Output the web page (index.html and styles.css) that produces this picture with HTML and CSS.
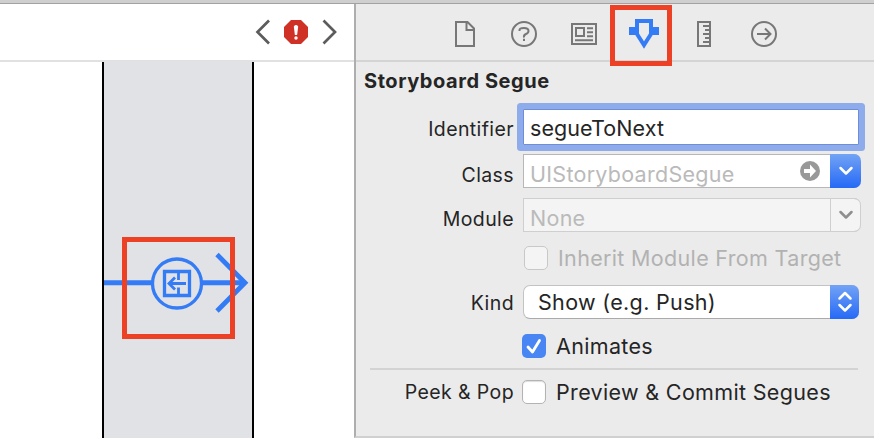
FILE: index.html
```
<!DOCTYPE html>
<html lang="en">
<head>
<meta charset="utf-8">
<title>Storyboard Segue</title>
<link rel="stylesheet" href="styles.css">
</head>
<body>
<div class="window-edge"></div>
<main class="workspace">
  <section class="editor">
    <header class="jump-bar">
      <svg width="90" height="32" viewBox="252 16 90 32" fill="none">
        <path d="M269 20.500 257.500 32 269 43.500M323.500 20.500 335 32 323.500 43.500" stroke="#5c5c5c" stroke-width="2.700"/>
        <path d="M291 20h10l7 7v10l-7 7h-10l-7-7v-10z" fill="#d03126"/>
        <path d="M293.800 26.500q2.200-2.800 4.400 0l-1.100 8.500h-2.200z" fill="#fff"/>
        <circle cx="296" cy="38" r="1.700" fill="#fff"/>
      </svg>
    </header>
    <div class="canvas">
      <div class="scene">
        <svg class="segue" width="148" height="70" viewBox="104 248 148 70" fill="none" stroke="#347bf6">
          <path d="M104 282.700h48M202 282.700h42" stroke-width="5"/>
          <path d="M217 254.500 245 282.700 217 311" stroke-width="4.800"/>
          <circle cx="177" cy="283.500" r="24.500" stroke-width="3.300"/>
          <path d="M164.500 271.500h25v24h-25z" stroke-width="3.300"/>
          <path d="M178.500 271v9M178.500 287.500v9M170 283.500h16M175 277.500l-6 6 6 6" stroke-width="2.800"/>
        </svg>
      </div>
    </div>
  </section>
  <aside class="inspector">
    <nav class="tabs">
      <svg width="340" height="40" viewBox="450 14 340 40" fill="none" stroke="#777" stroke-width="2">
        <path d="M456 22h11.500l6.500 6.500V46h-18zM466.500 22v8h7.500"/>
        <circle cx="524" cy="34" r="12"/>
        <path d="M519.500 31v-1q0-2 4.500-2t4.500 3q0 2-2.500 3t-2 3.500M524 38.800v2.200"/>
        <path d="M572 24h24v20h-24zM576 28h8v8h-8zM587 28.200h6M587 32.200h6M587 36.200h6M575 40.200h18"/>
        <path d="M637 21h14v13l-7 11-7-11z" stroke="#347bf6" stroke-width="4"/>
        <path d="M629 27h7v8h-7zM652 27h7v8h-7z" fill="#347bf6" stroke="none"/>
        <path d="M698 22h12v24h-12zM710 26h-7M710 30h-5M710 34h-7M710 38h-5M710 42h-7"/>
        <circle cx="764" cy="34" r="12"/>
        <path d="M757 34h13M765 28.500l5.500 5.500-5.500 5.500"/>
      </svg>
    </nav>
    <h1>Storyboard Segue</h1>
    <div class="row identifier">
      <span class="label">Identifier</span>
      <div class="field focused"><span>segueToNext</span></div>
    </div>
    <div class="row class-row">
      <span class="label">Class</span>
      <div class="field combo"><span>UIStoryboardSegue</span>
        <svg class="jump" width="20" height="20" viewBox="0 0 20 20"><circle cx="10" cy="10" r="10" fill="#999"/><path d="M4 8h6V3.500l6 6.500-6 6.500V12H4z" fill="#fff"/></svg>
        <span class="drop blue"><svg width="16" height="12" viewBox="0 0 16 12"><path d="M2.500 3 8 8.500 13.500 3"/></svg></span>
      </div>
    </div>
    <div class="row module">
      <span class="label">Module</span>
      <div class="field combo disabled"><span>None</span>
        <span class="drop grey"><svg width="16" height="12" viewBox="0 0 16 12"><path d="M2.500 3 8 8.500 13.500 3"/></svg></span>
      </div>
    </div>
    <div class="row inherit">
      <span></span>
      <div class="check-line"><span class="box dim"></span><span>Inherit Module From Target</span></div>
    </div>
    <div class="row kind">
      <span class="label">Kind</span>
      <div class="popup"><span>Show (e.g. Push)</span>
        <span class="stepper"><svg width="16" height="22" viewBox="0 0 16 22"><path d="M2.500 7.500 8 2l5.500 5.500M2.500 14 8 19.500l5.500-5.500"/></svg></span>
      </div>
    </div>
    <div class="row animates">
      <span></span>
      <div class="check-line"><span class="box on"><svg width="24" height="24" viewBox="0 0 24 24"><path d="M6 13l4.500 5L17.500 6.500"/></svg></span><span>Animates</span></div>
    </div>
    <hr>
    <div class="row peek">
      <span class="label">Peek &amp; Pop</span>
      <div class="check-line"><span class="box"></span><span>Preview &amp; Commit Segues</span></div>
    </div>
  </aside>
</main>
<div class="callout callout-tab"></div>
<div class="callout callout-segue"></div>
</body>
</html>
```
FILE: styles.css
```
* { box-sizing: border-box; }
body {
  margin: 0;
  width: 874px;
  height: 438px;
  overflow: hidden;
  position: relative;
  background: #fff;
  color: #252525;
  font-family: Inter, "Liberation Sans", sans-serif;
  font-size: 21.500px;
  letter-spacing: 0.330px;
}
svg { display: block; flex: none; }
.window-edge { height: 4px; background: #cfcfcf; border-bottom: 1px solid #a2a2a2; }
.workspace { display: flex; height: 434px; }
.editor { width: 354px; display: flex; flex-direction: column; }
.jump-bar { height: 58px; border-bottom: 2px solid #e1e1e1; padding: 12px 12px 0 252px; }
.canvas { flex: 1; padding-left: 102px; }
.scene {
  width: 152px;
  height: 100%;
  background: #e1e2e6;
  border: solid #000;
  border-width: 0 2px;
  padding-top: 186px;
}
.inspector {
  width: 520px;
  background: #ebebeb;
  border-left: 2px solid #aeaeae;
  border-bottom: 2px solid #d0d0d0;
}
.tabs { height: 58px; border-bottom: 2px solid #d4d4d4; padding: 10px 0 0 94px; }
h1 { margin: 0; padding: 7px 0 0 8px; height: 47px; font-size: 20px; line-height: 24px; font-weight: 700; letter-spacing: 0.560px; }
.row {
  display: grid;
  grid-template-columns: 158px 1fr;
  column-gap: 9px;
  align-items: center;
  white-space: nowrap;
}
.label { text-align: right; font-size: 19.500px; letter-spacing: 0.400px; padding-top: 2px; }
.class-row .label, .module .label { padding-top: 7px; }
.identifier .label { padding-top: 3px; }
.peek .label { padding-top: 0; }
.field {
  width: 336px;
  height: 36px;
  display: flex;
  align-items: center;
  padding-left: 6px;
  background: #fff;
  border: 1px solid #b7b7b7;
}
.focused { border-color: #6e8fd8; box-shadow: 0 0 0 6px #8eabeb; border-radius: 1px; padding-top: 2px; letter-spacing: 0.080px; }
.class-row { margin-top: 9px; }
.combo { width: 338px; height: 34px; color: #bababa; border-radius: 0 7px 7px 0; border-right: 0; padding-top: 5px; letter-spacing: 0.270px; }
.combo > span:first-child { margin-right: auto; }
.jump { margin: -5px 10px 0 0; }
.drop { width: 31px; height: 34px; margin: -6px 0 -1px; border-radius: 0 7px 7px 0; display: flex; align-items: center; justify-content: center; }
.drop path, .stepper path { fill: none; stroke: #fff; stroke-width: 2.500; stroke-linecap: round; stroke-linejoin: round; }
.blue, .stepper { background: linear-gradient(#73a3f5, #2569f6); }
.module { margin-top: 10px; }
.disabled { background: #f4f4f4; border-color: #cfcfcf; }
.disabled .drop { border: 1px solid #cfcfcf; }
.drop.grey path { stroke: #8e8e8e; }
.inherit { margin-top: 14px; color: #b2b2b2; }
.check-line { display: flex; align-items: center; height: 24px; gap: 10px; margin-left: -1px; }
.inherit .check-line { margin-left: 1px; }
.box { width: 24px; height: 24px; border: 1px solid #b3b3b3; border-radius: 5px; background: #fff; flex: none; box-shadow: inset 0 1px 1px #ddd; }
.dim { background: #f4f4f4; border-color: #c8c8c8; box-shadow: none; }
.on { background: #4a86f3; border: 0; box-shadow: none; }
.on path { fill: none; stroke: #fff; stroke-width: 2.800; stroke-linecap: round; stroke-linejoin: round; }
.kind { margin-top: 15px; }
.popup { width: 336px; height: 34px; background: #fff; border: 1px solid #c3c3c3; border-bottom-color: #aaa; border-radius: 7px; display: flex; align-items: center; justify-content: space-between; padding-left: 14px; }
.stepper { width: 29px; height: 34px; margin-right: -1px; border-radius: 0 7px 7px 0; display: flex; align-items: center; justify-content: center; }
.animates { margin-top: 15px; }
hr { height: 2px; border: 0; background: #d3d3d3; margin: 10px 14px; width: 488px; }
.callout { position: absolute; border: 5px solid #ec4125; }
.callout-tab { left: 610px; top: 5px; width: 62px; height: 61px; }
.callout-segue { left: 122px; top: 237px; width: 113px; height: 102px; }
```
